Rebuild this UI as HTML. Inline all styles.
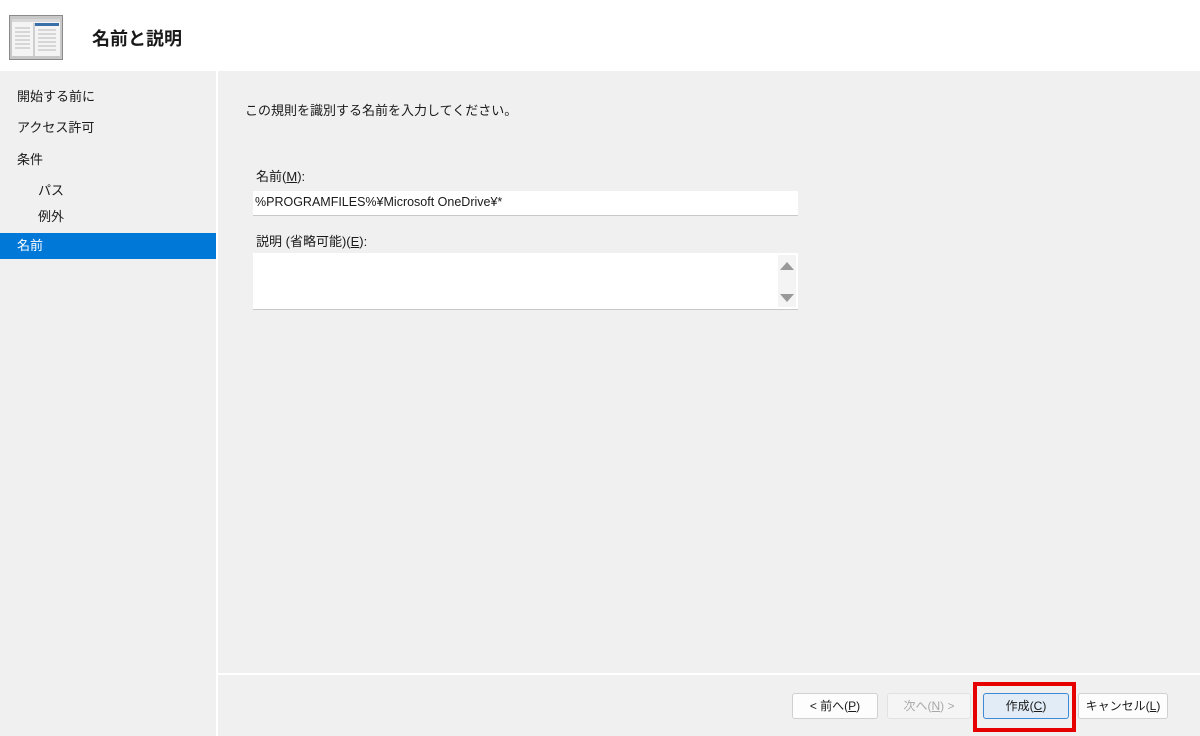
<!DOCTYPE html>
<html><head><meta charset="utf-8"><style>
*{margin:0;padding:0;box-sizing:border-box}
body{width:1200px;height:736px;overflow:hidden;background:#f0f0f0;font-family:"Liberation Sans","Noto Sans CJK JP",sans-serif;font-size:13px;color:#1a1a1a;position:relative}
.a{position:absolute}
.hdr{left:0;top:0;width:1200px;height:71px;background:#fff}
.nav{left:17px;font-size:13px}
.btn{position:absolute;top:693px;height:26px;border:1px solid #d0d0d0;border-radius:3px;background:#fdfdfd;text-align:center;line-height:24px;font-size:12px}
u{text-decoration:underline}
</style></head><body>
<div class="a hdr"></div>
<svg class="a" style="left:9px;top:15px" width="54" height="45" viewBox="0 0 54 45">
<rect x="0.5" y="0.5" width="53" height="44" fill="#c8c8c8" stroke="#8a8a8a"/>
<rect x="3" y="4" width="48" height="37" fill="#f4f4f4"/>
<rect x="3" y="4" width="48" height="3" fill="#d8d8d8"/>
<rect x="26" y="8" width="24" height="3" fill="#3a6ea8"/>
<line x1="25" y1="8" x2="25" y2="41" stroke="#aaa"/>
<g stroke="#b8b8b8"><line x1="6" y1="13" x2="21" y2="13"/><line x1="6" y1="17" x2="21" y2="17"/><line x1="6" y1="21" x2="21" y2="21"/><line x1="6" y1="25" x2="21" y2="25"/><line x1="6" y1="29" x2="21" y2="29"/><line x1="6" y1="33" x2="21" y2="33"/>
<line x1="29" y1="15" x2="47" y2="15"/><line x1="29" y1="19" x2="47" y2="19"/><line x1="29" y1="23" x2="47" y2="23"/><line x1="29" y1="27" x2="47" y2="27"/><line x1="29" y1="31" x2="47" y2="31"/><line x1="29" y1="35" x2="47" y2="35"/></g>
</svg>
<div class="a" style="left:92px;top:25px;font-size:18px;font-weight:bold">名前と説明</div>
<div class="a" style="left:216px;top:71px;width:2px;height:665px;background:#fff"></div>
<div class="a nav" style="top:86px">開始する前に</div>
<div class="a nav" style="top:117px">アクセス許可</div>
<div class="a nav" style="top:149px">条件</div>
<div class="a nav" style="left:38px;top:180px">パス</div>
<div class="a nav" style="left:38px;top:206px">例外</div>
<div class="a" style="left:0;top:233px;width:216px;height:26px;background:#0078d7"></div>
<div class="a nav" style="top:235px;color:#fff">名前</div>
<div class="a" style="left:245px;top:100px">この規則を識別する名前を入力してください。</div>
<div class="a" style="left:256px;top:166px">名前(<u>M</u>):</div>
<div class="a" style="left:253px;top:191px;width:545px;height:25px;background:#fff;border-bottom:1px solid #c8c8c8;padding:4px 0 0 2px;font-size:12.5px">%PROGRAMFILES%¥Microsoft OneDrive¥*</div>
<div class="a" style="left:256px;top:231px">説明 (省略可能)(<u>E</u>):</div>
<div class="a" style="left:253px;top:253px;width:545px;height:57px;background:#fff;border-bottom:1px solid #c8c8c8"></div>
<div class="a" style="left:778px;top:255px;width:18px;height:52px;background:#f4f4f4"></div>
<div class="a" style="left:780px;top:262px;width:0;height:0;border-left:7px solid transparent;border-right:7px solid transparent;border-bottom:8px solid #9a9a9a"></div>
<div class="a" style="left:780px;top:294px;width:0;height:0;border-left:7px solid transparent;border-right:7px solid transparent;border-top:8px solid #9a9a9a"></div>
<div class="a" style="left:218px;top:673px;width:982px;height:2px;background:#fff"></div>
<div class="btn" style="left:792px;width:86px">&lt; 前へ(<u>P</u>)</div>
<div class="btn" style="left:887px;width:84px;color:#a8a8a8;background:#f5f5f5;border-color:#e2e2e2">次へ(<u>N</u>) &gt;</div>
<div class="a" style="left:973px;top:682px;width:103px;height:50px;border:4px solid #e60000"></div>
<div class="btn" style="left:983px;width:86px;background:#e1ecf7;border-color:#3c8ad6">作成(<u>C</u>)</div>
<div class="btn" style="left:1078px;width:90px">キャンセル(<u>L</u>)</div>
</body></html>
